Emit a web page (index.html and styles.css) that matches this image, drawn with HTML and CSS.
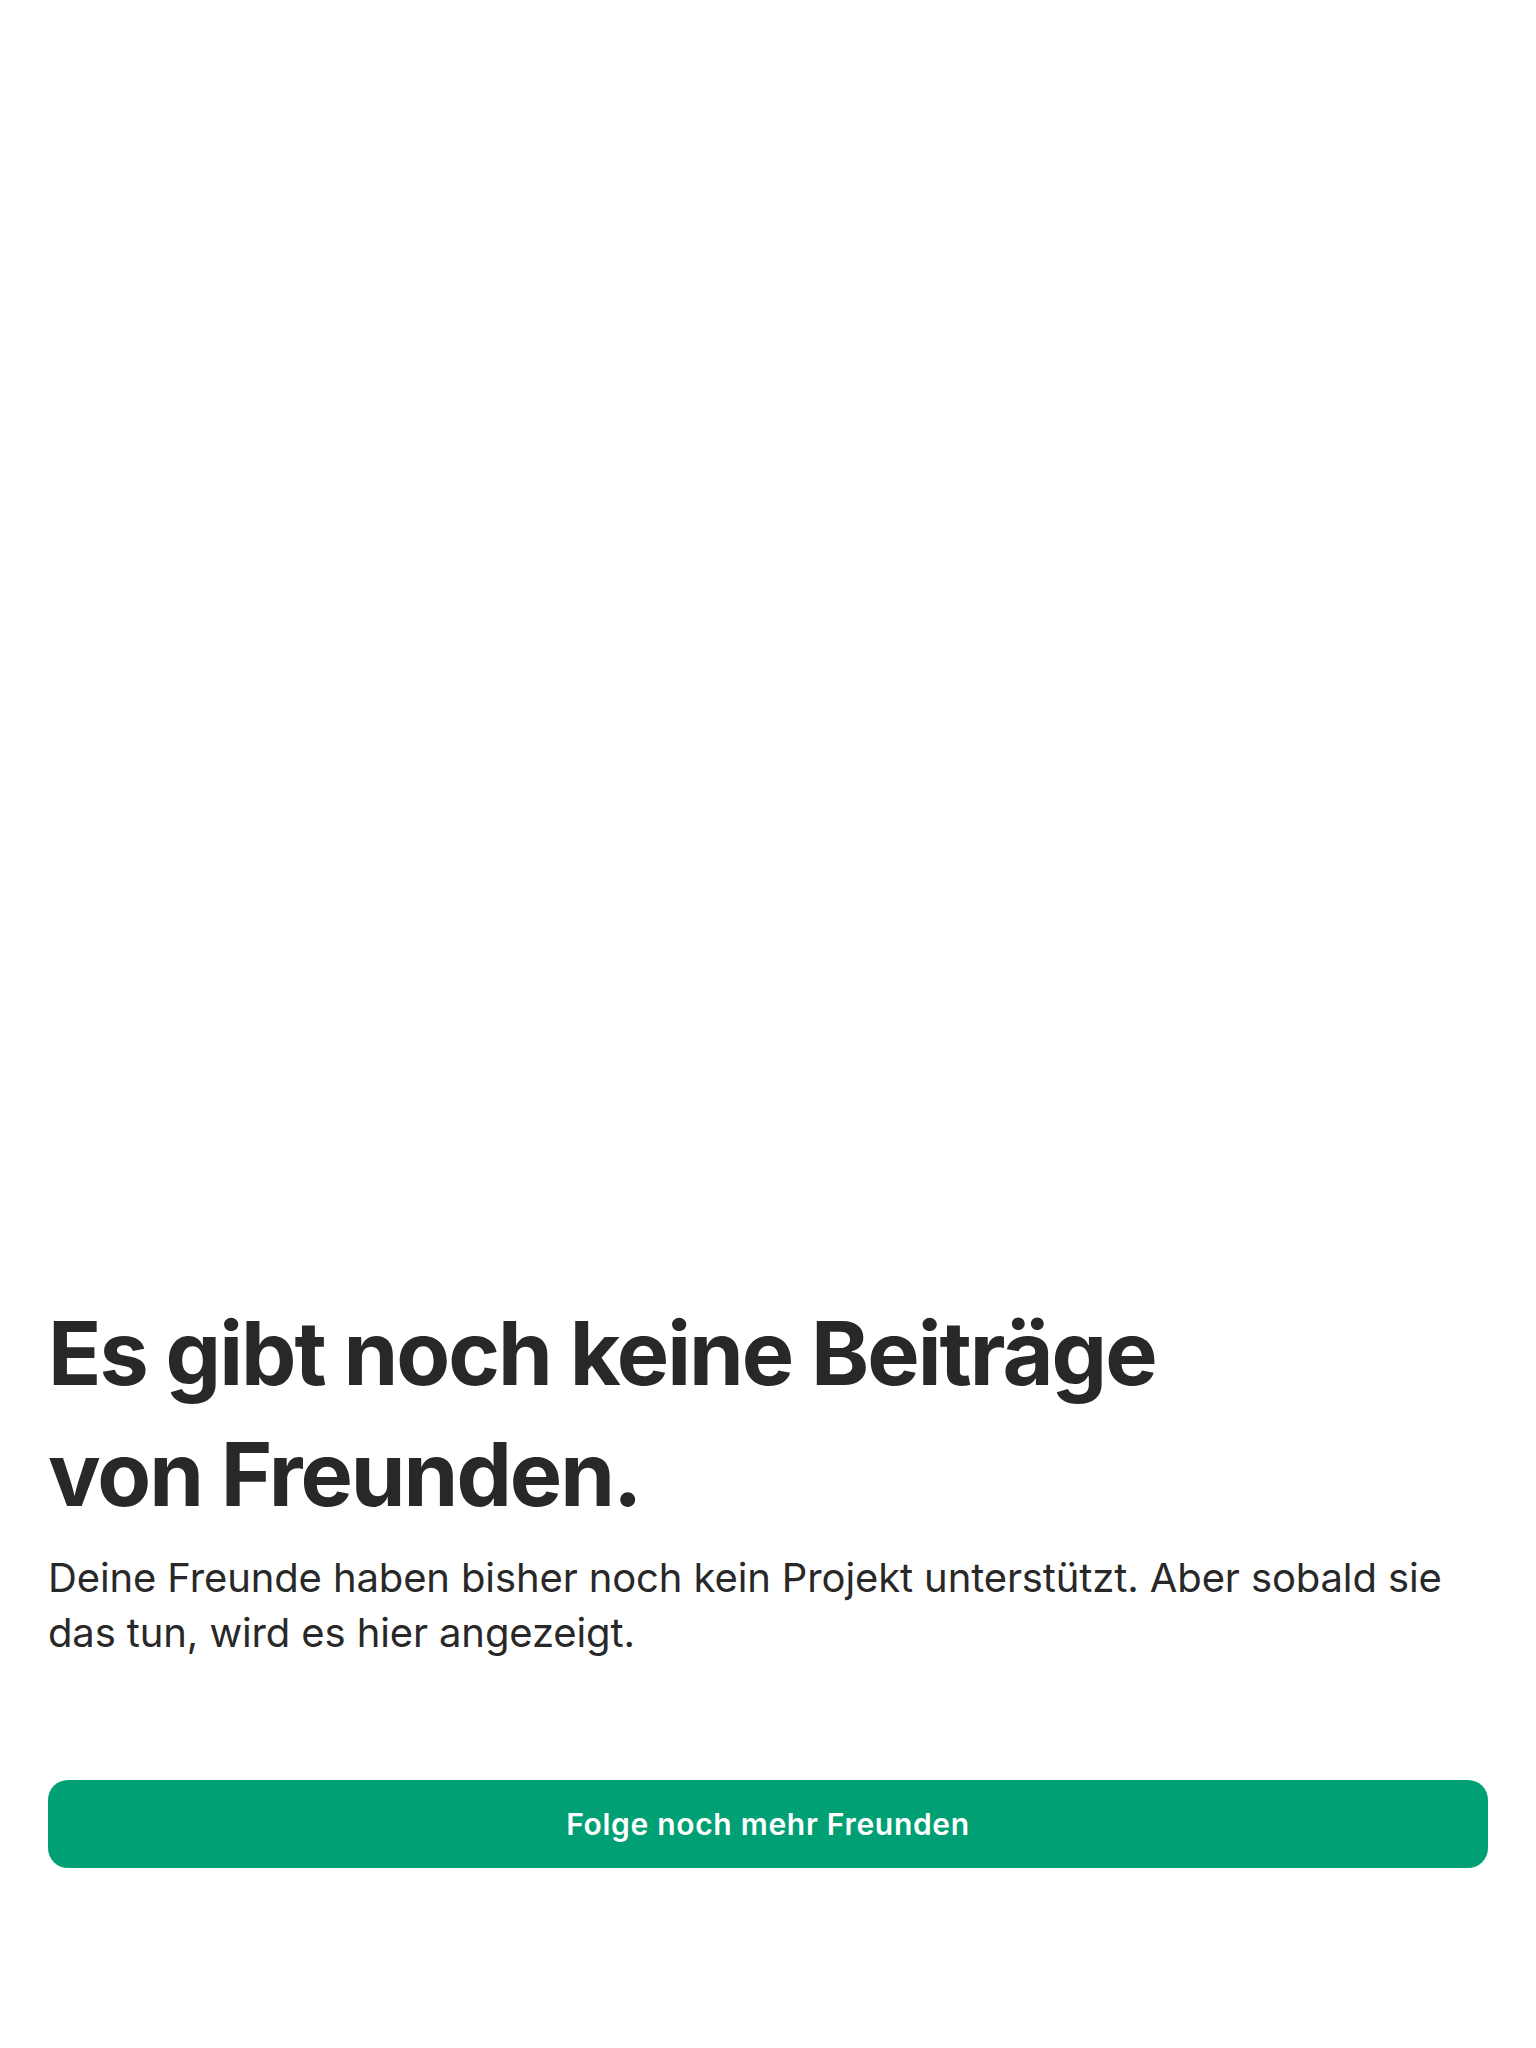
FILE: index.html
```html
<!DOCTYPE html>
<html lang="de">
<head>
<meta charset="utf-8">
<title>Beiträge von Freunden</title>
<link rel="stylesheet" href="styles.css">
</head>
<body>
<main class="empty-state">
  <h1 class="empty-title">Es gibt noch keine Beiträge<br>von Freunden.</h1>
  <p class="empty-text">Deine Freunde haben bisher noch kein Projekt unterstützt. Aber sobald sie das tun, wird es hier angezeigt.</p>
  <button class="primary-button" type="button">Folge noch mehr Freunden</button>
</main>
</body>
</html>
```
FILE: styles.css
```css
html, body {
  margin: 0;
  padding: 0;
  background: #ffffff;
}

body {
  font-family: Inter, "Noto Sans", "Liberation Sans", sans-serif;
  color: #282828;
}

.empty-state {
  box-sizing: border-box;
  min-height: 2048px;
  display: flex;
  flex-direction: column;
  justify-content: flex-end;
  padding: 0 48px 180px;
}

.empty-title {
  margin: 0;
  font-size: 88px;
  line-height: 121px;
  font-weight: 700;
  letter-spacing: -2px;
  color: #282828;
}

.empty-text {
  margin: 15px 0 0;
  font-size: 40px;
  line-height: 55px;
  font-weight: 400;
  letter-spacing: -0.12px;
  color: #282828;
}

.primary-button {
  margin-top: 120px;
  width: 100%;
  height: 88px;
  border: 0;
  border-radius: 20px;
  background: #00a074;
  color: #ffffff;
  font-family: Inter, "Noto Sans", "Liberation Sans", sans-serif;
  font-size: 30px;
  font-weight: 600;
  letter-spacing: 0.7px;
  cursor: pointer;
}
```
